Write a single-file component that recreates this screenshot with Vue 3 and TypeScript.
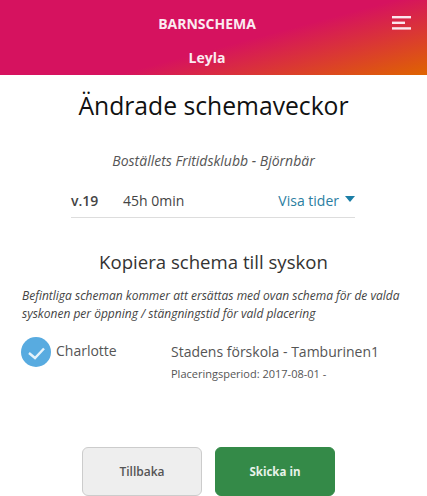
<script setup lang="ts">
const title = 'Ändrade schemaveckor'
</script>

<template>
  <div class="page">
    <header class="hero">
      <div class="top">
        <span class="brand">BARNSCHEMA</span>
        <svg class="menu" width="19" height="14" viewBox="0 0 19 14">
          <rect x="0" y="0" width="19" height="2.4" fill="#fbe6ee" />
          <rect x="0" y="5.6" width="13" height="2.4" fill="#fbe6ee" />
          <rect x="0" y="11.2" width="19" height="2.4" fill="#fbe6ee" />
        </svg>
      </div>
      <div class="name">Leyla</div>
    </header>

    <h1 class="title">{{ title }}</h1>
    <p class="place">Boställets Fritidsklubb - Björnbär</p>

    <div class="week">
      <span class="wk">v.19</span>
      <span class="hours">45h 0min</span>
      <span class="show">Visa tider<i class="caret"></i></span>
    </div>

    <h2 class="sub">Kopiera schema till syskon</h2>
    <p class="note">Befintliga scheman kommer att ersättas med ovan schema för de valda syskonen per öppning / stängningstid för vald placering</p>

    <div class="sibling">
      <div class="who">
        <svg class="check" width="30" height="30" viewBox="0 0 30 30">
          <circle cx="15" cy="15" r="15" fill="#58abe0" />
          <path d="M8 16l6 5L23 11.5" fill="none" stroke="#e6f3fb" stroke-width="2.4" />
        </svg>
        <span class="child">Charlotte</span>
      </div>
      <div class="info">
        <div class="school">Stadens förskola - Tamburinen1</div>
        <div class="period">Placeringsperiod: 2017-08-01 -</div>
      </div>
    </div>

    <div class="actions">
      <button class="btn back">Tillbaka</button>
      <button class="btn send">Skicka in</button>
    </div>
  </div>
</template>

<style scoped>
.page {
  position: relative;
  width: 427px;
  height: 496px;
  overflow: hidden;
  font-family: "Open Sans", sans-serif;
  background: #fff;
  color: #444;
}
.hero {
  height: 75px;
  background: linear-gradient(165deg, #d6125f 56%, #df6400 100%);
  color: #fbeaf1;
  font-weight: 700;
  text-align: center;
  font-size: 14px;
  line-height: 20px;
  padding-right: 13px;
  box-sizing: border-box;
}
.top {
  position: relative;
  padding-top: 14px;
}
.brand {
  display: block;
}
.menu {
  position: absolute;
  right: 3px;
  top: 16px;
}
.name {
  margin-top: 14px;
}
.title {
  margin: 14px 0 0;
  font-size: 24.7px;
  line-height: 34px;
  font-weight: 400;
  color: #111;
  text-align: center;
}
.place {
  margin: 28px 0 0;
  font-size: 14px;
  line-height: 20px;
  font-style: italic;
  color: #555;
  text-align: center;
}
.week {
  display: flex;
  align-items: center;
  margin: 12px 72px 0 71px;
  height: 34px;
  border-bottom: 1px solid #ddd;
  font-size: 14px;
}
.wk {
  font-weight: 600;
  width: 52px;
}
.hours {
  flex: 1;
}
.show {
  color: #2b7ea1;
  display: flex;
  align-items: center;
}
.caret {
  width: 0;
  height: 0;
  margin-left: 6px;
  margin-top: -3px;
  border-left: 5px solid transparent;
  border-right: 5px solid transparent;
  border-top: 6px solid #1b7ea6;
}
.sub {
  margin: 31px 0 0;
  font-size: 18.6px;
  line-height: 26px;
  font-weight: 400;
  color: #333;
  text-align: center;
}
.note {
  margin: 12px 20px 0 22px;
  font-size: 12px;
  line-height: 18px;
  font-style: italic;
  color: #444;
}
.sibling {
  display: flex;
  margin: 14px 0 0 21px;
}
.who {
  display: flex;
  width: 150px;
  gap: 5px;
}
.child {
  font-size: 14px;
  line-height: 20px;
  color: #555;
  margin-top: 4px;
}
.info {
  padding-top: 4px;
}
.school {
  font-size: 14px;
  line-height: 22px;
  color: #555;
}
.period {
  margin-top: 1px;
  font-size: 11px;
  line-height: 20px;
  color: #555;
}
.actions {
  position: absolute;
  top: 447px;
  left: 82px;
  display: flex;
  gap: 13px;
}
.btn {
  width: 120px;
  height: 49px;
  border-radius: 6px;
  font-family: inherit;
  font-size: 12px;
  font-weight: 600;
}
.back {
  background: #eee;
  border: 1px solid #ccc;
  color: #555;
}
.send {
  background: #348a48;
  border: 1px solid #348a48;
  color: #e8f3ea;
  font-weight: 700;
  font-size: 11.5px;
}
</style>
